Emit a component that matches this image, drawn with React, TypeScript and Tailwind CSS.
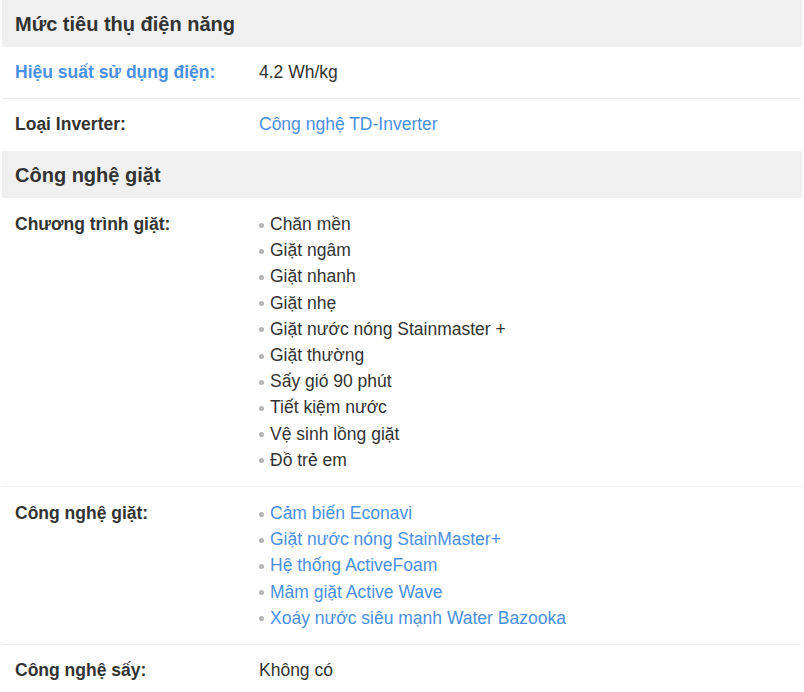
import React from 'react';

type Row = {
  label: string;
  labelLink?: boolean;
  value?: string;
  valueLink?: boolean;
  list?: string[];
  listLink?: boolean;
};

const sections: { title: string; rows: Row[] }[] = [
  {
    title: "Mức tiêu thụ điện năng",
    rows: [
      { label: "Hiệu suất sử dụng điện:", labelLink: true, value: "4.2 Wh/kg" },
      { label: "Loại Inverter:", value: "Công nghệ TD-Inverter", valueLink: true },
    ],
  },
  {
    title: "Công nghệ giặt",
    rows: [
      {
        label: "Chương trình giặt:",
        list: [
          "Chăn mền",
          "Giặt ngâm",
          "Giặt nhanh",
          "Giặt nhẹ",
          "Giặt nước nóng Stainmaster +",
          "Giặt thường",
          "Sấy gió 90 phút",
          "Tiết kiệm nước",
          "Vệ sinh lồng giặt",
          "Đồ trẻ em",
        ],
      },
      {
        label: "Công nghệ giặt:",
        listLink: true,
        list: [
          "Cảm biến Econavi",
          "Giặt nước nóng StainMaster+",
          "Hệ thống ActiveFoam",
          "Mâm giặt Active Wave",
          "Xoáy nước siêu mạnh Water Bazooka",
        ],
      },
      { label: "Công nghệ sấy:", value: "Không có" },
    ],
  },
];

const App: React.FC = () => {
  return (
    <div className="bg-white min-h-screen font-['Liberation_Sans',Arial,sans-serif] text-[#333]">
      <div className="mx-[2px]">
        {sections.map((sec, si) => (
          <div key={si}>
            <div className="bg-[#f0f0f0] h-[47px] flex items-center px-[13px]">
              <h2 className="text-[20px] font-bold leading-none">{sec.title}</h2>
            </div>
            {sec.rows.map((row, ri) => (
              <div
                key={ri}
                className={`grid grid-cols-[244px_1fr] px-[13px] text-[17.5px] border-b ${
                  ri < sec.rows.length - 1 ? 'border-[#eeeeee]' : 'border-transparent'
                } ${row.list ? 'py-[13px]' : 'py-[14px]'}`}
              >
                <div
                  className={`font-bold ${row.list ? 'leading-[26.2px]' : 'leading-[23px]'} ${
                    row.labelLink ? 'text-[#4a90e2]' : 'text-[#333]'
                  }`}
                >
                  {row.label}
                </div>
                {row.list ? (
                  <ul>
                    {row.list.map((item, i) => (
                      <li key={i} className="flex items-center leading-[26.2px]">
                        <span className="w-[5px] h-[5px] rounded-full bg-[#b5b5b5] mr-[6px] mt-[2px] shrink-0"></span>
                        <span className={row.listLink ? 'text-[#4a90e2]' : 'text-[#333]'}>{item}</span>
                      </li>
                    ))}
                  </ul>
                ) : (
                  <div className={`leading-[23px] ${row.valueLink ? 'text-[#4a90e2]' : 'text-[#333]'}`}>
                    {row.value}
                  </div>
                )}
              </div>
            ))}
          </div>
        ))}
      </div>
    </div>
  );
};

export default App;
